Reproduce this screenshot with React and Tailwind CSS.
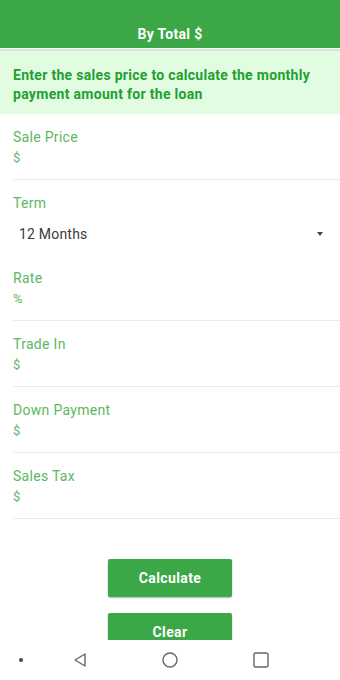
import React from "react";

function Field({ label, value }) {
  return (
    <div className="pt-[14px] pb-[12px] border-b border-[#ebebeb]">
      <div className="text-[14px] tracking-[0.3px] leading-[18px] text-[#5cb862]">{label}</div>
      <div className="mt-[3px] text-[13px] leading-[18px] text-[#5cb862]">{value}</div>
    </div>
  );
}

export default function App() {
  return (
    <div
      className="w-[340px] h-[680px] bg-white flex flex-col overflow-hidden"
      style={{ fontFamily: "Roboto, 'Liberation Sans', sans-serif" }}
    >
      <div className="flex-1 overflow-hidden flex flex-col">
        <div className="h-[48px] bg-[#3ba746] flex items-end justify-center pb-[6px] shrink-0">
          <span className="text-white text-[14px] tracking-[0.3px] font-bold leading-[16px]">By Total $</span>
        </div>
        <div className="h-[1px] bg-white shrink-0" />
        <div className="h-[2px] bg-[#d6e6d6] shrink-0" />
        <div className="h-[63px] bg-[#e2fce2] px-[13px] pt-[15px] shrink-0">
          <p className="text-[14px] tracking-[0.3px] font-bold leading-[19px] text-[#21a030]">
            Enter the sales price to calculate the monthly payment amount for the loan
          </p>
        </div>
        <div className="pl-[13px] shrink-0">
          <Field label="Sale Price" value="$" />
          <div className="pt-[14px] pb-[12px]">
            <div className="text-[14px] tracking-[0.3px] leading-[18px] text-[#5cb862]">Term</div>
            <div className="mt-[13px] flex items-center justify-between pl-[6px] pr-[17px]">
              <span className="text-[14px] tracking-[0.2px] leading-[18px] text-[#3a3a3a]">12 Months</span>
              <span className="w-0 h-0 border-l-[3px] border-r-[3px] border-t-[4px] border-l-transparent border-r-transparent border-t-[#444]" />
            </div>
          </div>
          <Field label="Rate" value="%" />
          <Field label="Trade In" value="$" />
          <Field label="Down Payment" value="$" />
          <Field label="Sales Tax" value="$" />
        </div>
        <div className="flex flex-col items-center pt-[40px] gap-[16px] shrink-0">
          <button className="w-[124px] h-[38px] bg-[#3ba746] rounded-[2px] shadow-[0_1px_2px_rgba(0,0,0,0.3)] text-white text-[14px] tracking-[0.4px] font-bold">
            Calculate
          </button>
          <button className="w-[124px] h-[38px] bg-[#3ba746] rounded-[2px] shadow-[0_1px_2px_rgba(0,0,0,0.3)] text-white text-[14px] tracking-[0.4px] font-bold">
            Clear
          </button>
        </div>
      </div>
      <div className="h-[40px] bg-white shrink-0 relative">
        <div className="absolute left-[19px] top-[18px] w-[4px] h-[4px] rounded-full bg-[#444]" />
        <svg className="absolute left-[72px] top-[12px]" width="16" height="16" viewBox="0 0 16 16">
          <path d="M13 2 L3 8 L13 14 Z" fill="none" stroke="#666" strokeWidth="1.4" strokeLinejoin="round" />
        </svg>
        <svg className="absolute left-[161px] top-[11px]" width="18" height="18" viewBox="0 0 18 18">
          <circle cx="9" cy="9" r="7" fill="none" stroke="#666" strokeWidth="1.4" />
        </svg>
        <svg className="absolute left-[252px] top-[11px]" width="18" height="18" viewBox="0 0 18 18">
          <rect x="2" y="2" width="14" height="14" rx="2" fill="none" stroke="#666" strokeWidth="1.4" />
        </svg>
      </div>
    </div>
  );
}
